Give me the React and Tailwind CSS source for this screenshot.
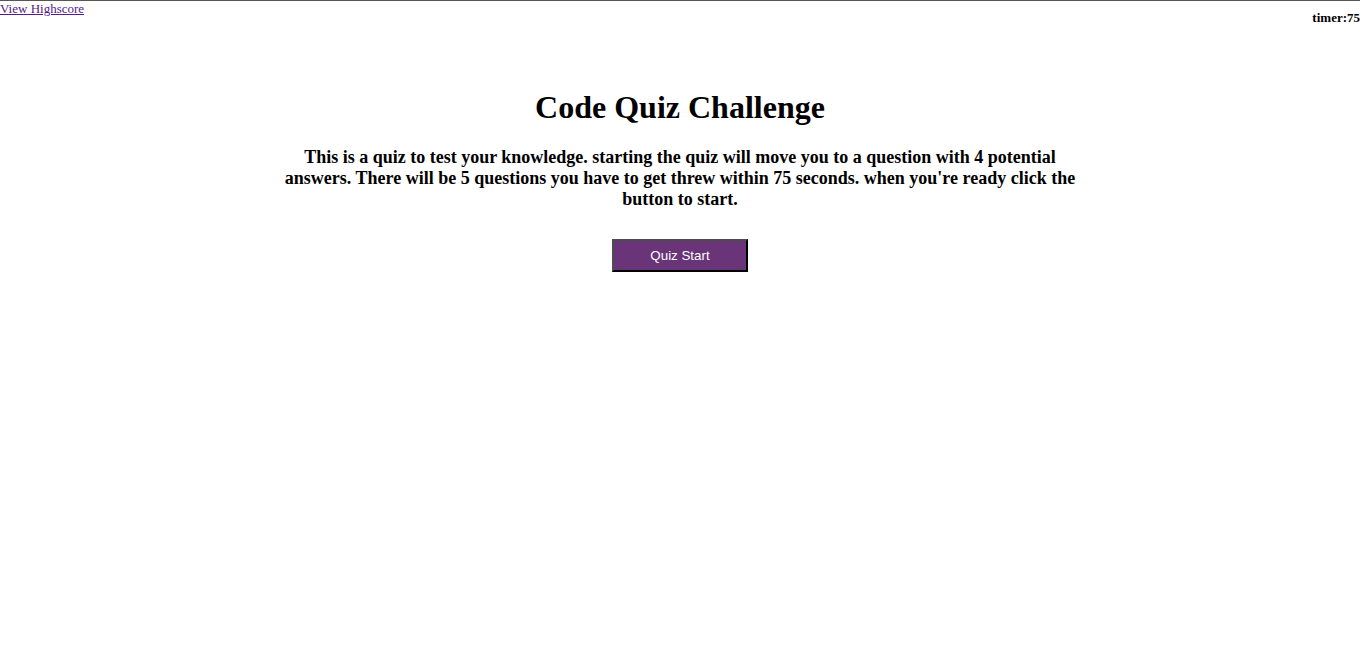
export default function App() {
  return (
    <div className="min-h-[655px] bg-white border-t border-[#555555] text-black" style={{ fontFamily: '"Liberation Serif", "Times New Roman", serif' }}>
      <header className="flex justify-between items-start">
        <a href="#" className="text-[13px] leading-[15px] text-[#551a8b] underline">View Highscore</a>
        <div className="mt-[9px] text-[13px] leading-[15px] font-bold">timer:75</div>
      </header>
      <main className="flex flex-col items-center">
        <h1 className="mt-[64px] text-[32px] leading-[37px] font-bold">Code Quiz Challenge</h1>
        <p className="mt-[21px] w-[800px] text-center text-[18px] leading-[21px] font-bold">
          This is a quiz to test your knowledge. starting the quiz will move you to a question with 4 potential answers. There will be 5 questions you have to get threw within 75 seconds. when you're ready click the button to start.
        </p>
        <button
          className="mt-[29px] w-[136px] h-[33px] bg-[#6a3479] text-white text-[13.33px] border-2 border-t-[#4d4d4d] border-l-[#4d4d4d] border-b-black border-r-black"
          style={{ fontFamily: '"Liberation Sans", Arial, sans-serif' }}
        >
          Quiz Start
        </button>
      </main>
    </div>
  );
}
